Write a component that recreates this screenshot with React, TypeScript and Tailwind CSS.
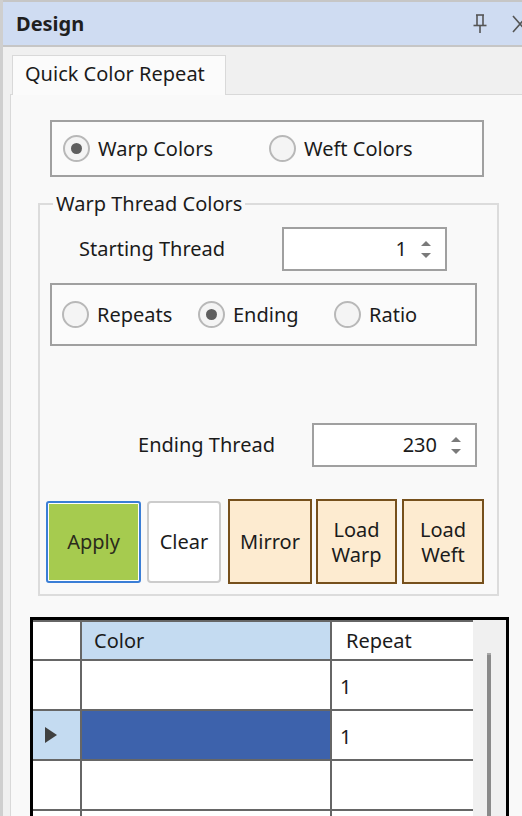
import React from "react";

const FONT = { fontFamily: '"Noto Sans", "DejaVu Sans", sans-serif' };

function Radio({ checked, label, width }: { checked?: boolean; label: string; width: string }) {
  return (
    <div className={`flex items-center gap-[8px] ${width}`}>
      <span className="flex h-[27px] w-[27px] items-center justify-center rounded-full border-2 border-[#b8b8b8] bg-[#f4f4f4]">
        {checked && <span className="h-[11px] w-[11px] rounded-full bg-[#5f5f5f]" />}
      </span>
      <span>{label}</span>
    </div>
  );
}

function Spin({ value, w }: { value: string; w: string }) {
  return (
    <div className={`flex h-[44px] items-center border-2 border-[#a0a0a0] bg-white ${w}`}>
      <span className="flex-1 text-right">{value}</span>
      <svg width="30" height="30" viewBox="0 0 30 30" className="mx-[4px]">
        <path d="M10 12 L15 7 L20 12 Z" fill="#7a7a7a" />
        <path d="M10 19 L15 24 L20 19 Z" fill="#7a7a7a" />
      </svg>
    </div>
  );
}

function PinIcon() {
  return (
    <svg width="14" height="20" viewBox="0 0 14 20" fill="none" stroke="#555" strokeWidth="1.6">
      <path d="M3 1 H11" />
      <path d="M4 1 V11 M10 1 V11" />
      <path d="M0.5 11.5 H13.5" />
      <path d="M7 12 V19" />
    </svg>
  );
}

type Row = { repeat: string; color?: string; current?: boolean };

const rows: Row[] = [
  { repeat: "1" },
  { repeat: "1", color: "bg-[#3d62ac]", current: true },
  { repeat: "" },
  { repeat: "" },
];

export default function App() {
  return (
    <div
      style={FONT}
      className="h-[816px] w-[522px] overflow-hidden border-l-[3px] border-[#cfcfcf] bg-[#f0f0f0] text-[20px] text-[#1b1b1b]"
    >
      {/* barre de titre */}
      <div className="flex h-[47px] items-center border-y-2 border-[#c6c6c6] bg-[#cfdcf2] pl-[13px]">
        <span className="flex-1 font-bold text-[#1f1f1f]">Design</span>
        <div className="mr-[-6px] flex items-center gap-[25px]">
          <PinIcon />
          <svg width="16" height="18" viewBox="0 0 16 18" stroke="#555" strokeWidth="1.6">
            <path d="M1 1 L15 17 M15 1 L1 17" />
          </svg>
        </div>
      </div>

      <div className="pl-[7px] pt-[8px]">
        {/* onglet */}
        <div className="relative z-10 -mb-px ml-[2px] flex h-[40px] w-[214px] items-center border border-b-0 border-[#d9d9d9] bg-[#fbfbfb] pb-[4px] pl-[12px]">
          Quick Color Repeat
        </div>

        <div className="h-[800px] border-l border-t border-[#d9d9d9] bg-[#f9f9f9] pt-[25px]">
          <div className="ml-[39px] flex h-[57px] w-[434px] items-center border-2 border-[#a0a0a0] bg-[#fbfbfb] pl-[11px]">
            <Radio checked label="Warp Colors" width="w-[206px]" />
            <Radio label="Weft Colors" width="w-[190px]" />
          </div>

          <fieldset className="ml-[27px] mt-[15px] w-[461px] border-2 border-[#dcdcdc] pb-[10px]">
            <legend className="ml-[13px] px-[3px] leading-[24px]">Warp Thread Colors</legend>

            <div className="mt-[11px] flex items-center">
              <span className="ml-[39px] w-[203px]">Starting Thread</span>
              <Spin value="1" w="w-[165px]" />
            </div>

            <div className="ml-[10px] mt-[12px] flex h-[63px] w-[427px] items-center border-2 border-[#a0a0a0] bg-[#fbfbfb] pl-[10px]">
              <Radio label="Repeats" width="w-[136px]" />
              <Radio checked label="Ending" width="w-[136px]" />
              <Radio label="Ratio" width="w-[120px]" />
            </div>

            <div className="mr-[20px] mt-[77px] flex items-center justify-end">
              <span className="mr-[37px]">Ending Thread</span>
              <Spin value="230" w="w-[165px]" />
            </div>

            <div className="ml-[6px] mt-[32px] flex items-center">
              <button className="h-[82px] w-[95px] rounded-[3px] border-2 border-[#3a7ed6] bg-white p-px">
                <span className="flex h-full w-full items-center justify-center bg-[#a6cb4f] text-[#2b2b1b]">
                  Apply
                </span>
              </button>
              <button className="ml-[6px] h-[82px] w-[74px] rounded-[4px] border-2 border-[#cccccc] bg-white">
                Clear
              </button>
              <button className="ml-[7px] h-[85px] w-[84px] border-2 border-[#76501c] bg-[#fdebd0]">
                Mirror
              </button>
              <button className="ml-[4px] h-[85px] w-[81px] border-2 border-[#76501c] bg-[#fdebd0] leading-[25px]">
                Load
                <br />
                Warp
              </button>
              <button className="ml-[5px] h-[85px] w-[82px] border-2 border-[#76501c] bg-[#fdebd0] leading-[25px]">
                Load
                <br />
                Weft
              </button>
            </div>
          </fieldset>

          {/* grille */}
          <div className="ml-[19px] mt-[21px] flex h-[220px] w-[479px] border-[3px] border-b-0 border-black bg-[#f0f0f0]">
            <div className="w-[440px] bg-white">
              <div className="flex h-[41px] border-y-2 border-[#666666]">
                <div className="w-[49px] border-r-2 border-[#666666] bg-white" />
                <div className="flex w-[250px] items-center border-r-2 border-[#666666] bg-[#c4dbf1] pl-[12px]">
                  Color
                </div>
                <div className="flex flex-1 items-center bg-white pl-[14px]">Repeat</div>
              </div>
              {rows.map((r, i) => (
                <div key={i} className="flex h-[50px] border-b-2 border-[#666666]">
                  <div
                    className={`flex w-[49px] items-center border-r-2 border-[#666666] pl-[11px] ${
                      r.current ? "bg-[#c4dbf1]" : "bg-white"
                    }`}
                  >
                    {r.current && (
                      <svg width="14" height="18" viewBox="0 0 14 18">
                        <path d="M1 1 L13 9 L1 17 Z" fill="#404040" />
                      </svg>
                    )}
                  </div>
                  <div className={`w-[250px] border-r-2 border-[#666666] ${r.color ?? "bg-white"}`} />
                  <div className="flex flex-1 items-center pl-[8px] pt-[4px]">{r.repeat}</div>
                </div>
              ))}
            </div>
            <div className="flex flex-1 justify-center pt-[33px]">
              <div className="ml-[-2px] w-[4px] border-t-2 border-[#a8a8a8] bg-[#8a8a8a]" />
            </div>
          </div>
        </div>
      </div>
    </div>
  );
}
